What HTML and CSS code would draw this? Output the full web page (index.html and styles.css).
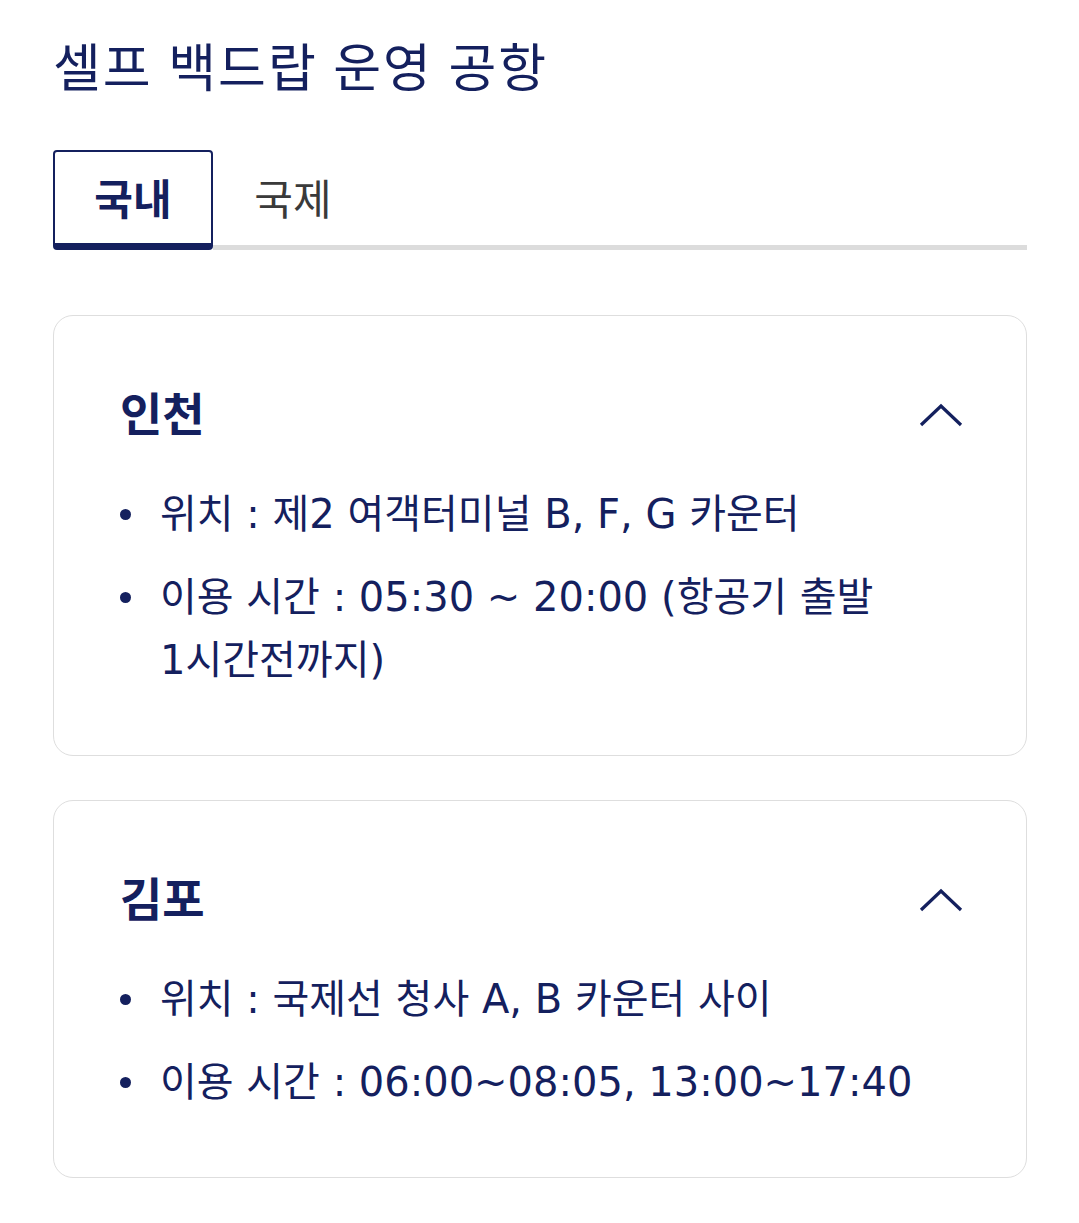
FILE: index.html
```html
<!DOCTYPE html>
<html lang="ko">
<head>
<meta charset="utf-8">
<link rel="stylesheet" href="styles.css">
</head>
<body>
<div class="page">
  <h1 class="title">셀프 백드랍 운영 공항</h1>
  <div class="tabs">
    <div class="tab active">국내</div>
    <div class="tab">국제</div>
    <div class="tab-fill"></div>
  </div>
  <div class="card">
    <div class="card-head">
      <h2 class="card-title">인천</h2>
      <svg class="chev" width="44" height="24" viewBox="0 0 44 24"><path d="M2 22 L22 3 L42 22" fill="none" stroke="#14205e" stroke-width="3.2"/></svg>
    </div>
    <ul class="list">
      <li><span class="dot"></span><span class="txt">위치 : 제2 여객터미널 B, F, G 카운터</span></li>
      <li><span class="dot"></span><span class="txt">이용 시간 : 05:30 ~ 20:00 (항공기 출발 1시간전까지)</span></li>
    </ul>
  </div>
  <div class="card">
    <div class="card-head">
      <h2 class="card-title">김포</h2>
      <svg class="chev" width="44" height="24" viewBox="0 0 44 24"><path d="M2 22 L22 3 L42 22" fill="none" stroke="#14205e" stroke-width="3.2"/></svg>
    </div>
    <ul class="list">
      <li><span class="dot"></span><span class="txt">위치 : 국제선 청사 A, B 카운터 사이</span></li>
      <li><span class="dot"></span><span class="txt">이용 시간 : 06:00~08:05, 13:00~17:40</span></li>
    </ul>
  </div>
</div>
</body>
</html>
```

FILE: styles.css
```css
* { box-sizing: border-box; }
html, body { margin: 0; padding: 0; background: #fff; }
body {
  font-family: "Noto Sans", "Noto Sans CJK KR", sans-serif;
  color: #14205e;
}
.page {
  padding: 37px 52px 40px 53px;
}
.title {
  margin: 0;
  font-size: 52px;
  line-height: 60px;
  font-weight: 400;
  letter-spacing: 2px;
  color: #14205e;
}
.tabs {
  display: flex;
  margin-top: 53px;
  height: 100px;
}
.tab {
  width: 160px;
  display: flex;
  align-items: center;
  justify-content: center;
  font-size: 42px;
  color: #3a3a3a;
  border-bottom: 5px solid #dcdcdc;
  padding-bottom: 2px;
}
.tab.active {
  border: 2px solid #14205e;
  border-bottom: 7px solid #14205e;
  border-radius: 4px;
  font-weight: 700;
  color: #14205e;
}
.tab-fill {
  flex: 1;
  border-bottom: 5px solid #dcdcdc;
}
.card {
  margin-top: 65px;
  border: 1.5px solid #dedede;
  border-radius: 20px;
  padding: 73px 63px 63px 66px;
}
.card + .card { margin-top: 44px; }
.card-head {
  display: flex;
  justify-content: space-between;
  align-items: center;
  height: 48px;
}
.card-title {
  margin: 0;
  font-size: 46px;
  line-height: 48px;
  font-weight: 700;
  color: #14205e;
}
.chev { display: block; margin-top: 4px; }
.list {
  list-style: none;
  margin: 46px 0 0;
  padding: 0;
}
.list li {
  display: flex;
  align-items: flex-start;
  font-family: "DejaVu Sans", "Noto Sans CJK KR", sans-serif;
  font-size: 40px;
  line-height: 63px;
}
.list li + li { margin-top: 20px; }
.dot {
  flex: none;
  width: 11px;
  height: 11px;
  border-radius: 50%;
  background: #14205e;
  margin: 26px 29px 0 0;
}
.txt { flex: 1; word-break: keep-all; padding-right: 20px; }
```
